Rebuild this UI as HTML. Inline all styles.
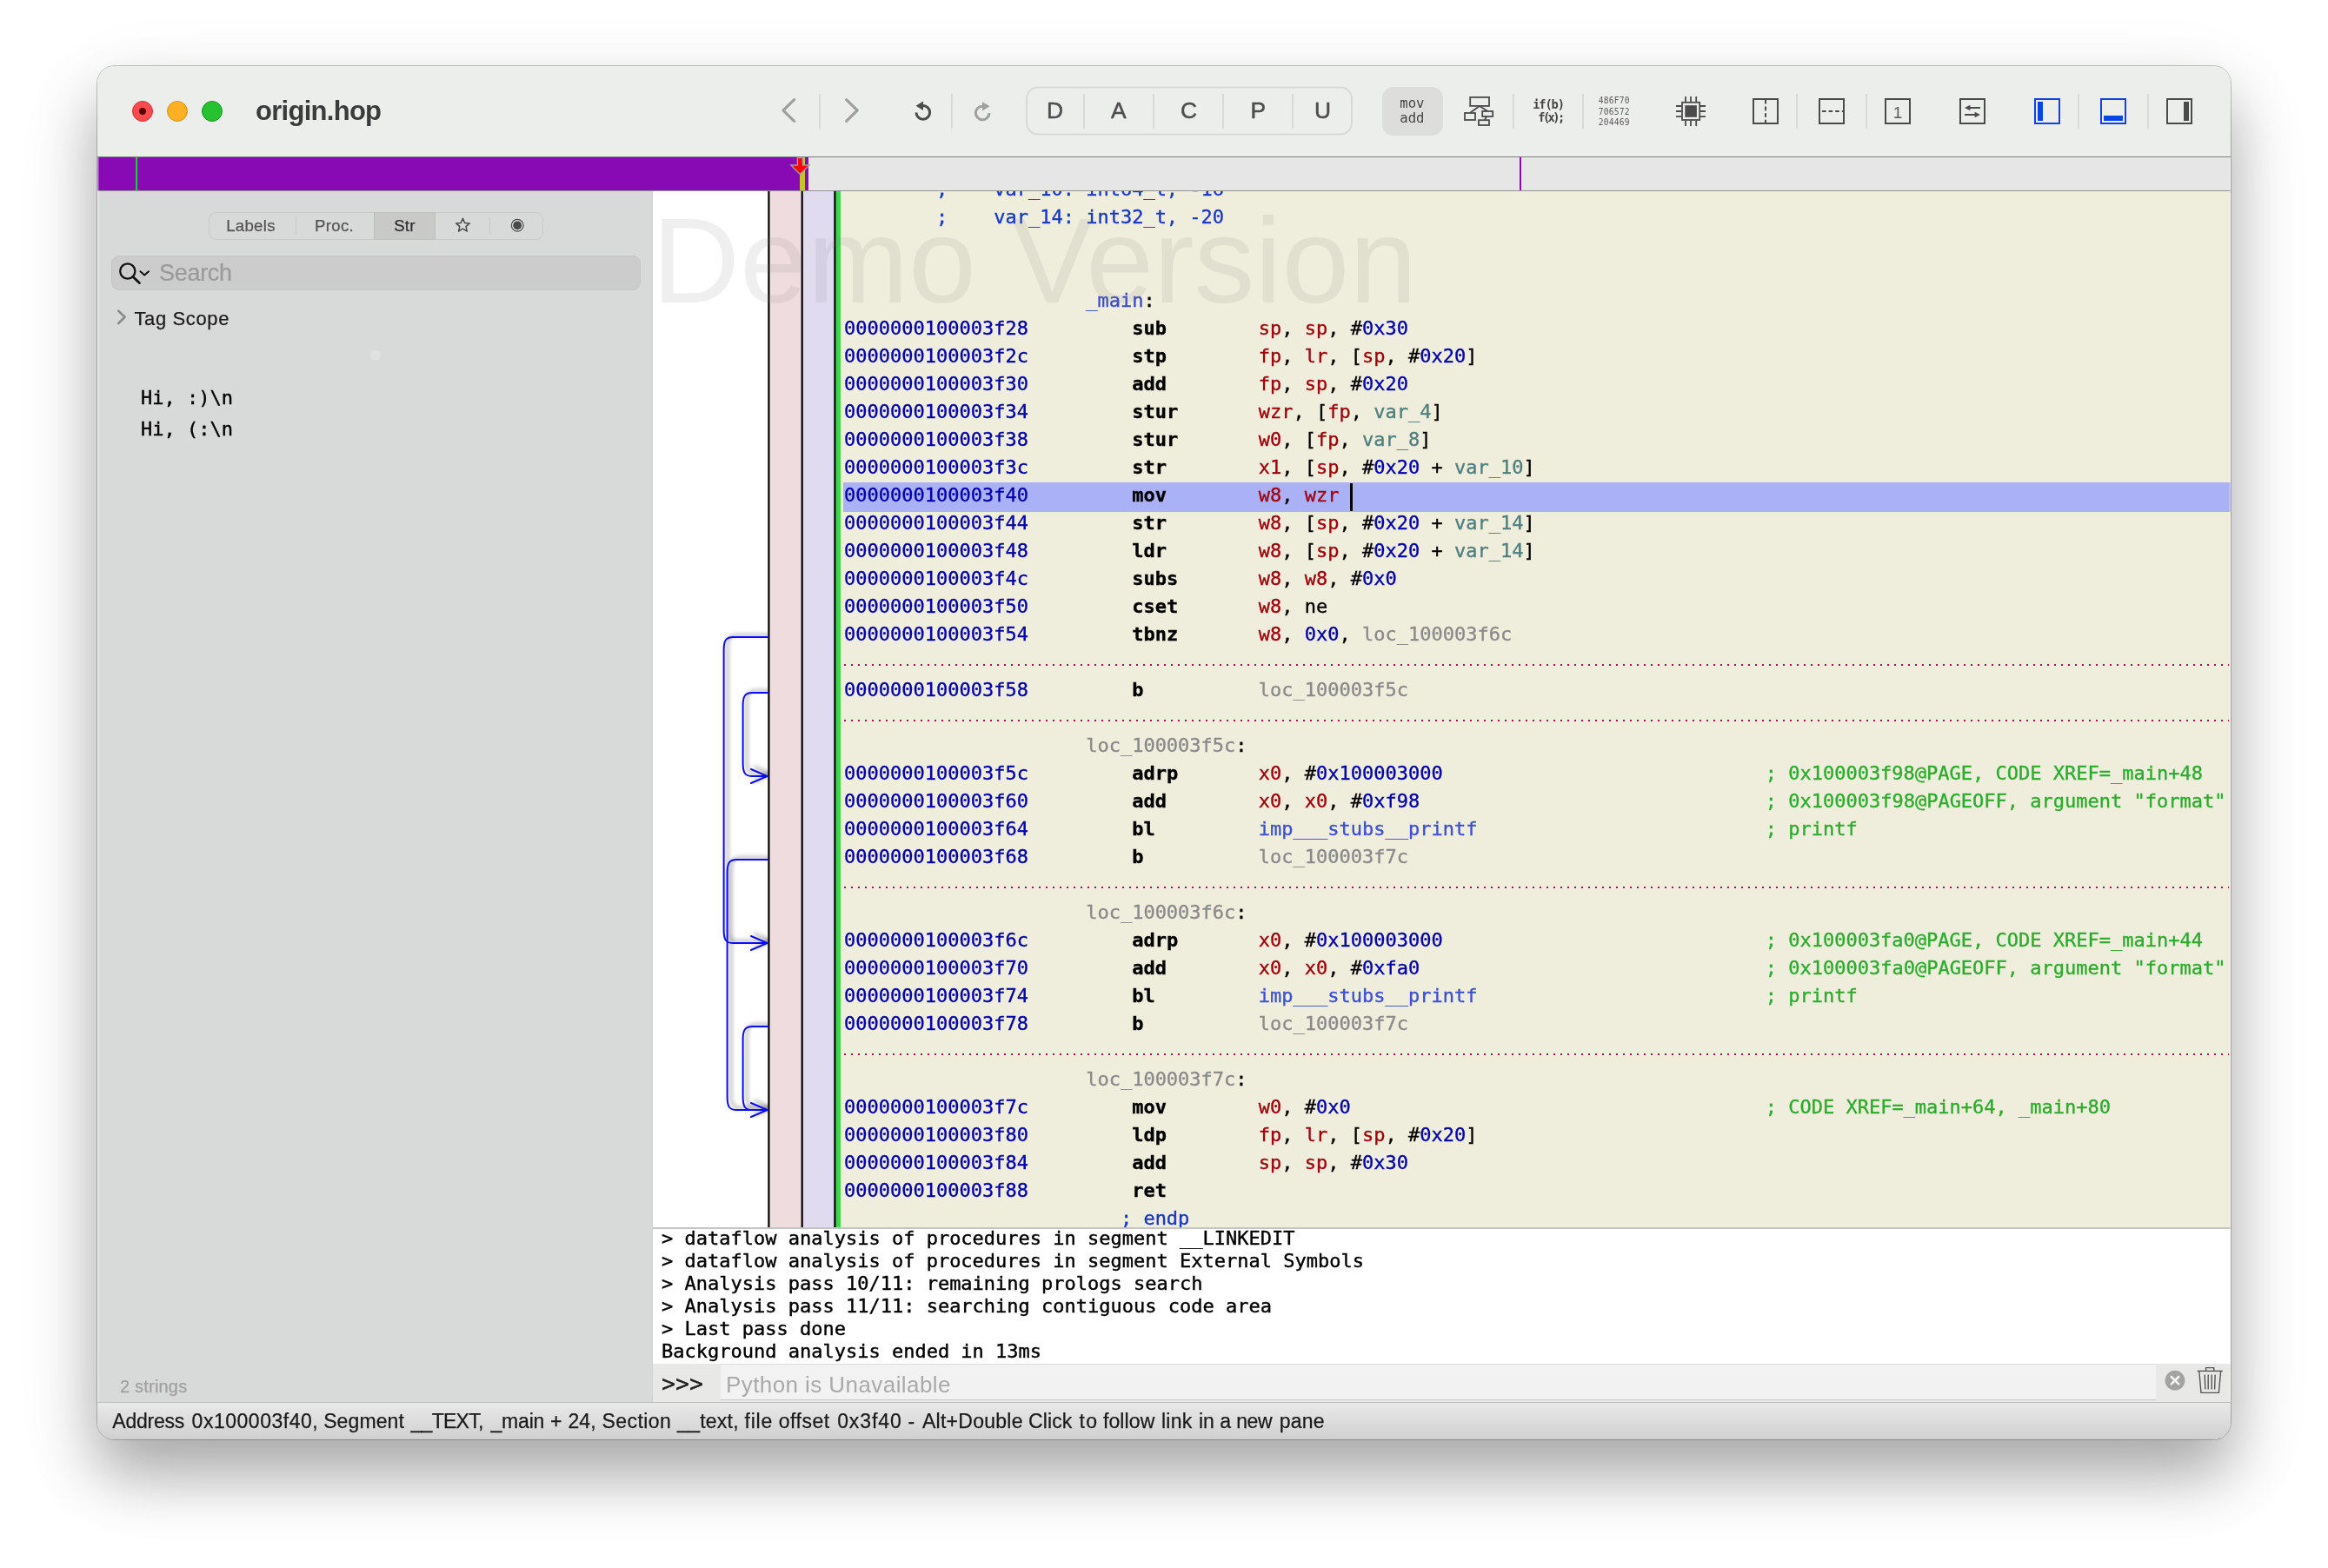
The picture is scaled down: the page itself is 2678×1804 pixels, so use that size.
<!DOCTYPE html>
<html lang="en">
<head>
<meta charset="utf-8">
<title>origin.hop</title>
<style>
*{box-sizing:border-box;margin:0;padding:0}
html,body{width:2678px;height:1804px;overflow:hidden;background:#fff}
body{position:relative;font-family:"Liberation Sans",sans-serif;color:#222}
.mono{font-family:"DejaVu Sans Mono","Liberation Mono",monospace}
#shadow{position:absolute;left:112px;top:76px;width:2454px;height:1580px;border-radius:20px;
  box-shadow:0 0 0 1px rgba(0,0,0,.22),0 40px 70px 0 rgba(0,0,0,.30),0 30px 110px 0 rgba(0,0,0,.08)}
#win{will-change:transform;position:absolute;left:112px;top:76px;width:2454px;height:1580px;border-radius:20px;overflow:hidden;background:#d8dad9}
#win::after{content:"";position:absolute;left:0;top:105px;width:2454px;height:1432px;box-shadow:inset 1.5px 0 0 rgba(255,255,255,.5),inset -1.5px 0 0 rgba(255,255,255,.35);pointer-events:none}
#titlebar{position:absolute;left:0;top:0;width:2454px;height:104px;background:#eceeeb}
#tline{position:absolute;left:0;top:104px;width:2454px;height:1px;background:#7e7e7e}
.tl{position:absolute;top:40px;width:24px;height:24px;border-radius:50%}
#title{position:absolute;left:182px;top:31.6px;font-size:31px;font-weight:bold;color:#3a3c3b;line-height:40px;letter-spacing:-.72px}
#nav{position:absolute;left:0;top:105px;width:2454px;height:38px;background:#e6e6e6}
#navp{position:absolute;left:0;top:0;width:818px;height:38px;background:#880ab4}
#nline{position:absolute;left:0;top:143px;width:2454px;height:1px;background:#939393}
#side{position:absolute;left:0;top:144px;width:638px;height:1393px;background:#d8dad9}
#sdiv{position:absolute;left:638px;top:144px;width:1px;height:1393px;background:#cfd1d0}
#code{position:absolute;left:639px;top:144px;width:1815px;height:1193px;background:#fff;overflow:hidden}
#codebg{position:absolute;left:216px;top:0;width:1599px;height:1193px;background:#efeddc}
.gl{position:absolute;top:0;height:1193px}
.ln{-webkit-text-stroke:.35px;position:absolute;left:220px;height:32px;line-height:32px;font-size:22px;white-space:pre;color:#000;font-family:"DejaVu Sans Mono","Liberation Mono",monospace}
.a,.n{color:#0000a8}
.m{font-weight:bold;color:#000}
.r{color:#a0000c}
.v{color:#4f7f7f}
.l{color:#8a8a8a}
.i{color:#3d50d0}
.b{color:#1738c6}
.lm{color:#3b4cc6}
.c{color:#2cab2c}
.dots{position:absolute;left:220px;width:1593px;height:2px;background:repeating-linear-gradient(90deg,#a30d52 0 2px,transparent 2px 8px)}
#hl{position:absolute;left:219px;top:335px;width:1596px;height:34px;background:#abb1f6}
#caret{position:absolute;left:802px;top:336px;width:3px;height:32px;background:#000}
#wm{position:absolute;left:-1px;top:0;font-size:139.8px;line-height:160px;color:rgba(120,120,120,.12);white-space:pre;word-spacing:2px}
#cline{position:absolute;left:639px;top:1336px;width:1815px;height:2px;background:#c4c4c4}
#console{position:absolute;left:639px;top:1338px;width:1815px;height:155px;background:#fff;font-size:22px;line-height:26px;white-space:pre;color:#000;padding-left:10px;-webkit-text-stroke:.4px #000;font-family:"DejaVu Sans Mono","Liberation Mono",monospace}
#cin{position:absolute;left:639px;top:1493px;width:1815px;height:44px;background:#e8e9e7}
#cfield{position:absolute;left:78px;top:0;width:1651px;height:42px;background:#f2f2f2;border-top:1px solid #dcdcdc;border-bottom:1px solid #c9c9c9}
#status{position:absolute;left:0;top:1537px;width:2454px;height:43px;background:linear-gradient(#e9e9e9,#d0d0d0);border-top:1px solid #bcbcbc}

#seg{position:absolute;left:128px;top:24px;width:385px;height:32px;box-shadow:inset 0 0 0 1px #c9cac9;border-radius:9px;overflow:hidden}
.sg{position:absolute;top:0;height:32px;line-height:31px;text-align:center;font-size:18.6px;color:#555;letter-spacing:.32px;-webkit-text-stroke:.25px}
.sg.sel{background:#c9cac8;color:#2e2e2e;border:1px solid #bcbdbc;border-width:0 1px;box-shadow:inset 0 1px 0 #c0c1c0,inset 0 -1px 0 #c0c1c0}
.sgs{position:absolute;top:6px;width:1px;height:19px;background:#c6c7c6}
#search{position:absolute;left:16px;top:74px;width:609px;height:40px;border-radius:9px;background:#cbcccb;border:1px solid #c3c4c3}
#stext{position:absolute;left:54px;top:0;line-height:38px;font-size:27px;letter-spacing:-.3px;color:#9a9a9a;-webkit-text-stroke:.2px}
#tag{position:absolute;left:42.5px;top:133px;line-height:28px;font-size:22px;color:#1c1c1c;letter-spacing:.62px;-webkit-text-stroke:.25px}
#dot{position:absolute;left:314px;top:183px;width:12px;height:12px;border-radius:50%;background:rgba(255,255,255,.22)}
.str{-webkit-text-stroke:.4px;position:absolute;left:50px;height:36px;line-height:36px;font-size:22px;color:#000;white-space:pre;font-family:"DejaVu Sans Mono","Liberation Mono",monospace}
#count{position:absolute;left:26px;top:1362px;line-height:26px;font-size:20px;color:#a0a0a0;letter-spacing:.2px;-webkit-text-stroke:.25px}
#prompt{position:absolute;left:10px;top:7px;line-height:32px;font-size:26.6px;color:#222;font-family:"DejaVu Sans Mono","Liberation Mono",monospace;-webkit-text-stroke:.3px}
#ph{position:absolute;left:6px;top:7px;line-height:32px;font-size:26px;color:#aaa;white-space:pre;letter-spacing:.42px}
#stat{position:absolute;left:0;top:6px;height:30px;line-height:30px;font-size:23px;color:#1a1a1a;white-space:pre;-webkit-text-stroke:.25px}
.w{position:absolute;top:0;white-space:pre}
</style>
</head>
<body>
<div id="shadow"></div>
<div id="win">
  <div id="titlebar">
    <div class="tl" style="left:40px;background:#fd4b4f;border:1px solid #dd2a30"></div>
    <div class="tl" style="left:80px;background:#fdb024;border:1px solid #d99411"></div>
    <div class="tl" style="left:120px;background:#27c231;border:1px solid #159b1f"></div>
    <div style="position:absolute;left:48px;top:48px;width:8px;height:8px;border-radius:50%;background:#5a0000"></div>
    <div id="title">origin.hop</div>
    <svg id="tb" width="2454" height="104" viewBox="112 76 2454 104" style="position:absolute;left:0;top:0">
      <!-- nav chevrons -->
      <g fill="none" stroke="#a0a19f" stroke-width="3.2" stroke-linecap="round" stroke-linejoin="round">
        <path d="M913.6 114.6 L901 127 L913.6 139.4"/>
        <path d="M973.6 114.6 L986.2 127 L973.6 139.4"/>
      </g>
      <g fill="#dadbd9">
        <rect x="942" y="108" width="2" height="40"/>
        <rect x="1094" y="108" width="2" height="40"/>
        <rect x="1740" y="108" width="2" height="40"/>
        <rect x="1820" y="108" width="2" height="40"/>
        <rect x="2066" y="108" width="2" height="40"/>
        <rect x="2146" y="108" width="2" height="40"/>
        <rect x="2390" y="108" width="2" height="40"/>
        <rect x="2470" y="108" width="2" height="40"/>
      </g>
      <!-- undo -->
      <g fill="none" stroke="#4b4b4b" stroke-width="3">
        <path d="M1061.8 121.6 A7.8 7.8 0 1 1 1054 129.4"/>
      </g>
      <path d="M1053.6 121.8 L1062 116.6 L1062 127 Z" fill="#4b4b4b"/>
      <!-- redo -->
      <g fill="none" stroke="#a0a19f" stroke-width="3">
        <path d="M1130.2 122.2 A7.8 7.8 0 1 0 1138 130"/>
      </g>
      <path d="M1138.6 122.2 L1130 117.2 L1130 127.4 Z" fill="#a0a19f"/>
      <!-- DACPU group -->
      <rect x="1181" y="100.6" width="374" height="54" rx="13" ry="13" fill="none" stroke="#d8d9d7" stroke-width="2"/>
      <g fill="#d9dad8">
        <rect x="1246" y="108" width="2" height="40"/>
        <rect x="1326" y="108" width="2" height="40"/>
        <rect x="1406" y="108" width="2" height="40"/>
        <rect x="1486" y="108" width="2" height="40"/>
      </g>
      <g font-family="'Liberation Sans',sans-serif" font-size="26.4" fill="#4d4d4d" stroke="#4d4d4d" stroke-width=".5" text-anchor="middle">
        <text x="1213.6" y="136">D</text>
        <text x="1286.8" y="136">A</text>
        <text x="1367.5" y="136">C</text>
        <text x="1447.4" y="136">P</text>
        <text x="1521.5" y="136">U</text>
      </g>
      <!-- mov/add -->
      <rect x="1590" y="100" width="70" height="56" rx="13" ry="13" fill="#dddedc"/>
      <g font-family="'DejaVu Sans Mono','Liberation Mono',monospace" font-size="15.6" fill="#444" text-anchor="middle">
        <text x="1624.4" y="124.4">mov</text>
        <text x="1624.4" y="140.9">add</text>
      </g>
      <!-- graph -->
      <g fill="none" stroke="#4b4b4b" stroke-width="1.8">
        <rect x="1691.2" y="111.9" width="21.8" height="10"/>
        <rect x="1685" y="130" width="12" height="8"/>
        <rect x="1705.2" y="128" width="12" height="6"/>
        <rect x="1701" y="138.2" width="12" height="5.8"/>
        <path d="M1702 122 L1691.5 129.6 M1702 122 L1711 127.8 M1710 134 L1708 138"/>
      </g>
      <!-- if(b) f(x); -->
      <g font-family="'DejaVu Sans Mono','Liberation Mono',monospace" font-weight="bold" font-size="13.7" fill="#444">
        <text x="1763.2" y="124.7" letter-spacing="-1.1">if(b)</text>
        <text x="1769.2" y="140.1" letter-spacing="-2.55">f(x);</text>
      </g>
      <!-- hex -->
      <g font-family="'DejaVu Sans Mono','Liberation Mono',monospace" font-size="9.6" letter-spacing=".22" fill="#5c5c5c">
        <text x="1838.8" y="119">486F70</text>
        <text x="1838.8" y="131.6">706572</text>
        <text x="1838.8" y="144.2">204469</text>
      </g>
      <!-- chip -->
      <g fill="none" stroke="#4b4b4b" stroke-width="1.8">
        <rect x="1935" y="117.8" width="20.2" height="20.2"/>
        <path d="M1939 111 V117 M1945 111 V117 M1951.2 111 V117 M1939 139 V145 M1945 139 V145 M1951.2 139 V145 M1928 122 H1934 M1928 128 H1934 M1928 134.2 H1934 M1956 122 H1962 M1956 128 H1962 M1956 134.2 H1962"/>
      </g>
      <rect x="1938.3" y="121.2" width="13.6" height="13.6" fill="#4b4b4b"/>
      <!-- split icons -->
      <g fill="none" stroke="#4b4b4b" stroke-width="2">
        <rect x="2017" y="114" width="28" height="28"/>
        <path d="M2031 115 V142" stroke-dasharray="4.6 3"/>
        <rect x="2093" y="114" width="28" height="28"/>
        <path d="M2094 128 H2121" stroke-dasharray="4.6 3" stroke-dashoffset="-2"/>
        <rect x="2169" y="114" width="28" height="28"/>
        <rect x="2255" y="114" width="28" height="28"/>
        <path d="M2264 124 H2278 M2260 132 H2274" stroke-width="1.8"/>
        <rect x="2493" y="114" width="28" height="28"/>
      </g>
      <path d="M2260 124 L2266.4 120.8 V127.2 Z M2278 132 L2271.6 128.8 V135.2 Z" fill="#4b4b4b"/>
      <rect x="2512" y="117" width="6" height="22" fill="#4b4b4b"/>
      <text x="2183" y="136" font-family="'Liberation Sans',sans-serif" font-size="19" fill="#5a5a5a" text-anchor="middle">1</text>
      <g fill="none" stroke="#0a44e4" stroke-width="2">
        <rect x="2341" y="114" width="28" height="28"/>
        <rect x="2417" y="114" width="28" height="28"/>
      </g>
      <rect x="2344" y="117" width="6" height="22" fill="#0a44e4"/>
      <rect x="2420" y="133" width="22" height="6" fill="#0a44e4"/>
    </svg>

  </div>
  <div id="tline"></div>
  <div id="nav"><div id="navp"></div>
    <div style="position:absolute;left:44px;top:0;width:2px;height:38px;background:#27c93f"></div>
    <div style="position:absolute;left:808px;top:0;width:6px;height:38px;background:#c8c229"></div>
    <div style="position:absolute;left:1636px;top:0;width:2px;height:38px;background:#880ab4"></div>
    <svg width="30" height="24" viewBox="905 180 30 24" style="position:absolute;left:793px;top:-1px">
      <path d="M917.4 181.6 H923.4 V190 H931 L920.4 200.4 L909.8 190 H917.4 Z" fill="#ff0000" stroke="#9a9d9c" stroke-width="1.4" stroke-linejoin="miter"/>
    </svg>
  </div>
  <div id="nline"></div>
  <div id="side">
    <div id="seg">
      <div class="sg" style="left:-2px;width:101px">Labels</div>
      <div class="sg" style="left:100px;width:89px">Proc.</div>
      <div class="sg sel" style="left:190px;width:71px">Str</div>
      <div class="sgs" style="left:100px"></div>
      <div class="sgs" style="left:323px"></div>
      <svg width="384" height="31" viewBox="0 0 384 31" style="position:absolute;left:0;top:0">
        <path d="M292.4 7.2 L294.6 12.4 L300.2 12.9 L296 16.6 L297.3 22.1 L292.4 19.2 L287.5 22.1 L288.8 16.6 L284.6 12.9 L290.2 12.4 Z" fill="none" stroke="#4a4a4a" stroke-width="1.5" stroke-linejoin="round"/>
        <circle cx="355.2" cy="15.3" r="6.9" fill="none" stroke="#4a4a4a" stroke-width="1.2"/>
        <circle cx="355.2" cy="15.3" r="4.9" fill="#4a4a4a"/>
      </svg>
    </div>
    <div id="search">
      <svg width="60" height="39" viewBox="0 0 60 39" style="position:absolute;left:-1px;top:-1px">
        <circle cx="18.8" cy="18" r="8.6" fill="none" stroke="#111" stroke-width="2.3"/>
        <path d="M25 24.4 L32.4 31.6" fill="none" stroke="#111" stroke-width="2.8" stroke-linecap="round"/>
        <path d="M33.4 18.2 L38.2 22.6 L43 18.2" fill="none" stroke="#111" stroke-width="2" stroke-linecap="round" stroke-linejoin="round"/>
      </svg>
      <span id="stext">Search</span>
    </div>
    <svg width="14" height="20" viewBox="0 0 14 20" style="position:absolute;left:21px;top:135px">
      <path d="M3.2 2.6 L10.6 9.8 L3.2 17" fill="none" stroke="#8b8b8b" stroke-width="2.6" stroke-linecap="round" stroke-linejoin="round"/>
    </svg>
    <div id="tag">Tag Scope</div>
    <div id="dot"></div>
    <div class="str" style="top:220px">Hi, :)\n</div>
    <div class="str" style="top:256px">Hi, (:\n</div>
    <div id="count">2 strings</div>
  </div>
  <div id="sdiv"></div>
  <div id="code">
    <div id="codebg"></div>
    <div class="gl" style="left:134px;width:38px;background:#eedcde"></div>
    <div class="gl" style="left:172px;width:38px;background:#e1dbef"></div>
    <div class="gl" style="left:210px;width:6px;background:#3fd64f"></div>
    <svg width="216" height="1193" viewBox="751 0 216 1193" style="position:absolute;left:0;top:0">
      <rect x="883.3" y="0" width="2.2" height="1193" fill="#000"/>
      <rect x="921.6" y="0" width="2.2" height="1193" fill="#000"/>
      <rect x="959.3" y="0" width="2.2" height="1193" fill="#000"/>
    </svg>
    <div id="hl"></div>
<svg id="arr" width="133" height="1193" viewBox="751 220 133 1193" style="position:absolute;left:0;top:0"><defs><filter id="sh" x="-30%" y="-5%" width="160%" height="110%"><feGaussianBlur stdDeviation="2"/></filter></defs><g fill="none" stroke="#000" stroke-opacity=".28" stroke-width="3" stroke-linecap="round" stroke-linejoin="round" filter="url(#sh)" transform="translate(4.5,-2.5)"><path d="M884 733 H843.6 C835.6 733 832.6 736 832.6 748 V1070 C832.6 1082 835.6 1085 843.6 1085 H882.4"/><path d="M864 1077 L882.6 1085 L864 1093"/><path d="M884 797 H865.6 C857.6 797 854.6 800 854.6 812 V878 C854.6 890 857.6 893 865.6 893 H882.4"/><path d="M864 885 L882.6 893 L864 901"/><path d="M884 989 H847.6 C839.6 989 836.6 992 836.6 1004 V1262 C836.6 1274 839.6 1277 847.6 1277 H882.4"/><path d="M884 1181 H865.6 C857.6 1181 854.6 1184 854.6 1196 V1262 C854.6 1274 857.6 1277 865.6 1277 H882.4"/><path d="M864 1269 L882.6 1277 L864 1285"/></g><g fill="none" stroke="#0a0aff" stroke-width="2" stroke-linecap="round" stroke-linejoin="round"><path d="M884 733 H843.6 C835.6 733 832.6 736 832.6 748 V1070 C832.6 1082 835.6 1085 843.6 1085 H882.4"/><path d="M864 1077 L882.6 1085 L864 1093"/><path d="M884 797 H865.6 C857.6 797 854.6 800 854.6 812 V878 C854.6 890 857.6 893 865.6 893 H882.4"/><path d="M864 885 L882.6 893 L864 901"/><path d="M884 989 H847.6 C839.6 989 836.6 992 836.6 1004 V1262 C836.6 1274 839.6 1277 847.6 1277 H882.4"/><path d="M884 1181 H865.6 C857.6 1181 854.6 1184 854.6 1196 V1262 C854.6 1274 857.6 1277 865.6 1277 H882.4"/><path d="M864 1269 L882.6 1277 L864 1285"/></g></svg>
<div class="ln" style="top:-18px">        <span class="b">;    var_10: int64_t, -16</span></div>
<div class="ln" style="top:14px">        <span class="b">;    var_14: int32_t, -20</span></div>
<div class="ln" style="top:110px">                     <span class="lm">_main</span>:</div>
<div class="ln" style="top:142px"><span class="a">0000000100003f28</span>         <span class="m">sub</span>        <span class="r">sp</span>, <span class="r">sp</span>, #<span class="n">0x30</span></div>
<div class="ln" style="top:174px"><span class="a">0000000100003f2c</span>         <span class="m">stp</span>        <span class="r">fp</span>, <span class="r">lr</span>, [<span class="r">sp</span>, #<span class="n">0x20</span>]</div>
<div class="ln" style="top:206px"><span class="a">0000000100003f30</span>         <span class="m">add</span>        <span class="r">fp</span>, <span class="r">sp</span>, #<span class="n">0x20</span></div>
<div class="ln" style="top:238px"><span class="a">0000000100003f34</span>         <span class="m">stur</span>       <span class="r">wzr</span>, [<span class="r">fp</span>, <span class="v">var_4</span>]</div>
<div class="ln" style="top:270px"><span class="a">0000000100003f38</span>         <span class="m">stur</span>       <span class="r">w0</span>, [<span class="r">fp</span>, <span class="v">var_8</span>]</div>
<div class="ln" style="top:302px"><span class="a">0000000100003f3c</span>         <span class="m">str</span>        <span class="r">x1</span>, [<span class="r">sp</span>, #<span class="n">0x20</span> + <span class="v">var_10</span>]</div>
<div class="ln" style="top:334px"><span class="a">0000000100003f40</span>         <span class="m">mov</span>        <span class="r">w8</span>, <span class="r">wzr</span></div>
<div class="ln" style="top:366px"><span class="a">0000000100003f44</span>         <span class="m">str</span>        <span class="r">w8</span>, [<span class="r">sp</span>, #<span class="n">0x20</span> + <span class="v">var_14</span>]</div>
<div class="ln" style="top:398px"><span class="a">0000000100003f48</span>         <span class="m">ldr</span>        <span class="r">w8</span>, [<span class="r">sp</span>, #<span class="n">0x20</span> + <span class="v">var_14</span>]</div>
<div class="ln" style="top:430px"><span class="a">0000000100003f4c</span>         <span class="m">subs</span>       <span class="r">w8</span>, <span class="r">w8</span>, #<span class="n">0x0</span></div>
<div class="ln" style="top:462px"><span class="a">0000000100003f50</span>         <span class="m">cset</span>       <span class="r">w8</span>, ne</div>
<div class="ln" style="top:494px"><span class="a">0000000100003f54</span>         <span class="m">tbnz</span>       <span class="r">w8</span>, <span class="n">0x0</span>, <span class="l">loc_100003f6c</span></div>
<div class="ln" style="top:558px"><span class="a">0000000100003f58</span>         <span class="m">b</span>          <span class="l">loc_100003f5c</span></div>
<div class="ln" style="top:622px">                     <span class="l">loc_100003f5c</span>:</div>
<div class="ln" style="top:654px"><span class="a">0000000100003f5c</span>         <span class="m">adrp</span>       <span class="r">x0</span>, #<span class="n">0x100003000</span>                            <span class="c">; 0x100003f98@PAGE, CODE XREF=_main+48</span></div>
<div class="ln" style="top:686px"><span class="a">0000000100003f60</span>         <span class="m">add</span>        <span class="r">x0</span>, <span class="r">x0</span>, #<span class="n">0xf98</span>                              <span class="c">; 0x100003f98@PAGEOFF, argument "format"</span></div>
<div class="ln" style="top:718px"><span class="a">0000000100003f64</span>         <span class="m">bl</span>         <span class="i">imp___stubs__printf</span>                         <span class="c">; printf</span></div>
<div class="ln" style="top:750px"><span class="a">0000000100003f68</span>         <span class="m">b</span>          <span class="l">loc_100003f7c</span></div>
<div class="ln" style="top:814px">                     <span class="l">loc_100003f6c</span>:</div>
<div class="ln" style="top:846px"><span class="a">0000000100003f6c</span>         <span class="m">adrp</span>       <span class="r">x0</span>, #<span class="n">0x100003000</span>                            <span class="c">; 0x100003fa0@PAGE, CODE XREF=_main+44</span></div>
<div class="ln" style="top:878px"><span class="a">0000000100003f70</span>         <span class="m">add</span>        <span class="r">x0</span>, <span class="r">x0</span>, #<span class="n">0xfa0</span>                              <span class="c">; 0x100003fa0@PAGEOFF, argument "format"</span></div>
<div class="ln" style="top:910px"><span class="a">0000000100003f74</span>         <span class="m">bl</span>         <span class="i">imp___stubs__printf</span>                         <span class="c">; printf</span></div>
<div class="ln" style="top:942px"><span class="a">0000000100003f78</span>         <span class="m">b</span>          <span class="l">loc_100003f7c</span></div>
<div class="ln" style="top:1006px">                     <span class="l">loc_100003f7c</span>:</div>
<div class="ln" style="top:1038px"><span class="a">0000000100003f7c</span>         <span class="m">mov</span>        <span class="r">w0</span>, #<span class="n">0x0</span>                                    <span class="c">; CODE XREF=_main+64, _main+80</span></div>
<div class="ln" style="top:1070px"><span class="a">0000000100003f80</span>         <span class="m">ldp</span>        <span class="r">fp</span>, <span class="r">lr</span>, [<span class="r">sp</span>, #<span class="n">0x20</span>]</div>
<div class="ln" style="top:1102px"><span class="a">0000000100003f84</span>         <span class="m">add</span>        <span class="r">sp</span>, <span class="r">sp</span>, #<span class="n">0x30</span></div>
<div class="ln" style="top:1134px"><span class="a">0000000100003f88</span>         <span class="m">ret</span></div>
<div class="ln" style="top:1166px">                        <span class="b">; endp</span></div>
<div class="dots" style="top:544px"></div>
<div class="dots" style="top:608px"></div>
<div class="dots" style="top:800px"></div>
<div class="dots" style="top:992px"></div>
    <div id="caret"></div>
    <div id="wm">Demo Version</div>
  </div>
  <div id="cline"></div>
  <div id="console"><div style="margin-top:-2px"></div><div>&gt; dataflow analysis of procedures in segment __LINKEDIT</div><div>&gt; dataflow analysis of procedures in segment External Symbols</div><div>&gt; Analysis pass 10/11: remaining prologs search</div><div>&gt; Analysis pass 11/11: searching contiguous code area</div><div>&gt; Last pass done</div><div>Background analysis ended in 13ms</div></div>
  <div id="cin"><div id="prompt">&gt;&gt;&gt;</div><div id="cfield"><span id="ph">Python is Unavailable</span></div>
    <svg width="80" height="44" viewBox="2486 1569 80 44" style="position:absolute;left:1735px;top:0">
      <circle cx="2502" cy="1588.2" r="11.4" fill="#a3a4a2"/>
      <path d="M2497.8 1584 L2506.2 1592.4 M2506.2 1584 L2497.8 1592.4" stroke="#f4f4f4" stroke-width="2.6" stroke-linecap="round" fill="none"/>
      <g fill="none" stroke="#555" stroke-width="1.4" stroke-linejoin="round">
        <path d="M2527.6 1577.4 H2556.8"/>
        <path d="M2537.6 1577.2 V1573.6 H2546.8 V1577.2"/>
        <path d="M2529.8 1577.6 L2532 1602.4 H2552.4 L2554.6 1577.6"/>
        <path d="M2536.2 1581.4 L2536.8 1598.6 M2540.2 1581.4 V1598.6 M2544.2 1581.4 V1598.6 M2548.2 1581.4 L2547.6 1598.6"/>
      </g>
    </svg>
  </div>
  <div id="status"><div id="stat"><span class="w" style="left:17.3px;letter-spacing:-0.229px">Address</span> <span class="w" style="left:108.6px;letter-spacing:0.517px">0x100003f40,</span> <span class="w" style="left:260.2px;letter-spacing:0.089px">Segment</span> <span class="w" style="left:360.5px;letter-spacing:-0.719px">__TEXT,</span> <span class="w" style="left:452.5px;letter-spacing:-0.188px">_main</span> <span class="w" style="left:521.0px;letter-spacing:0px">+</span> <span class="w" style="left:541.4px;letter-spacing:0.158px">24,</span> <span class="w" style="left:580.6px;letter-spacing:0.396px">Section</span> <span class="w" style="left:667.1px;letter-spacing:0.241px">__text,</span> <span class="w" style="left:744.5px;letter-spacing:0.763px">file</span> <span class="w" style="left:783.7px;letter-spacing:0.53px">offset</span> <span class="w" style="left:851.2px;letter-spacing:0.887px">0x3f40</span> <span class="w" style="left:932.45px;letter-spacing:0px">-</span> <span class="w" style="left:949px;letter-spacing:0.259px">Alt+Double</span> <span class="w" style="left:1070.9px;letter-spacing:0.143px">Click</span> <span class="w" style="left:1129.6px;letter-spacing:1.21px">to</span> <span class="w" style="left:1156.9px;letter-spacing:0.121px">follow</span> <span class="w" style="left:1224px;letter-spacing:0.263px">link</span> <span class="w" style="left:1266.9px;letter-spacing:-0.01px">in</span> <span class="w" style="left:1291.3px;letter-spacing:0px">a</span> <span class="w" style="left:1310.3px;letter-spacing:-0.492px">new</span> <span class="w" style="left:1359.8px;letter-spacing:0.175px">pane</span></div></div>
</div>
</body>
</html>
